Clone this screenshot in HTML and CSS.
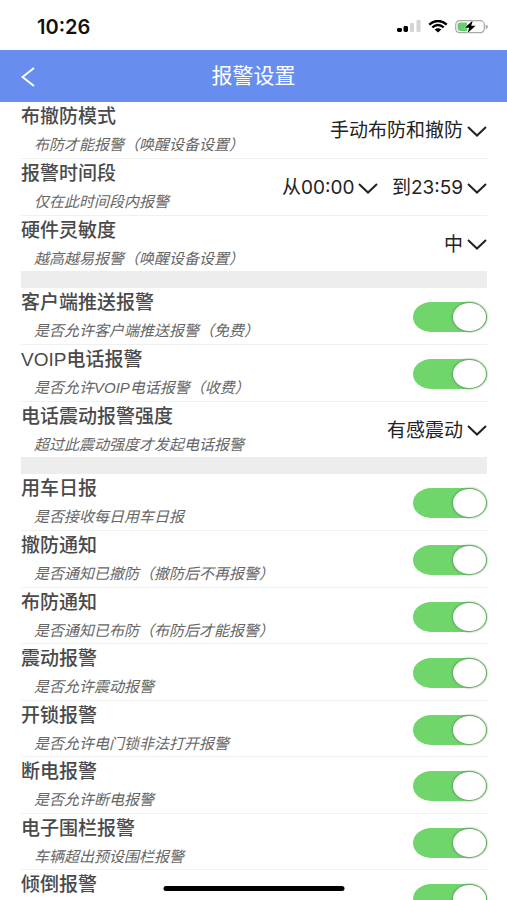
FILE: index.html
```html
<!DOCTYPE html>
<html lang="zh-CN">
<head>
<meta charset="utf-8">
<meta name="viewport" content="width=device-width, initial-scale=1">
<title>报警设置</title>
<link rel="stylesheet" href="styles.css">
</head>
<body>
<div class="status-bar">
  <span class="clock">10:26</span>
  <div class="status-icons">
    <svg class="signal" viewBox="0 0 24 13" aria-hidden="true">
      <rect x="0" y="8" width="5" height="4" rx="1.4"/>
      <rect x="6.5" y="6" width="4.5" height="6" rx="1.4"/>
      <rect class="faint" x="13" y="3" width="4" height="9" rx="1.2"/>
      <rect class="faint" x="19.500" y="0" width="4" height="12" rx="1.2"/>
    </svg>
    <svg class="wifi" viewBox="0 0 20 13" aria-hidden="true">
      <path d="M1.200 4.600Q10 -2.600 18.800 4.600"/>
      <path d="M4.300 7.400Q10 2.800 15.700 7.400"/>
      <path class="solid" d="M10 12.400L6.600 9.600Q10 7 13.400 9.600Z"/>
    </svg>
    <svg class="battery" viewBox="0 0 33 14" aria-hidden="true">
      <rect class="shell" x=".7" y=".7" width="28.600" height="12" rx="4"/>
      <path class="tip" d="M30.600 4.400Q33 5 33 6.700T30.600 9Z"/>
      <path class="charge" d="M5 2.400H12V11H5Q2.600 11 2.600 8.600V4.800Q2.600 2.400 5 2.400Z"/>
      <path class="bolt" d="M17.800 .4L9.800 7.700H14.200L12.600 13L20.600 5.800H16.200Z"/>
    </svg>
  </div>
</div>

<header class="nav-bar">
  <button class="back" type="button" aria-label="返回">
    <svg viewBox="0 0 14 20" aria-hidden="true"><path d="M13 1L1.500 10L13 19"/></svg>
  </button>
  <h1 class="nav-title">报警设置</h1>
</header>

<main class="settings">
  <section class="group">
    <div class="row">
      <div class="label"><label class="name" for="mode">布撤防模式</label><p class="hint">布防才能报警（唤醒设备设置）</p></div>
      <span class="picker"><select id="mode"><option>手动布防和撤防</option></select><svg class="chevron" viewBox="0 0 20 11" aria-hidden="true"><path d="M1 1L10 9.500L19 1"/></svg></span>
    </div>
    <div class="row">
      <div class="label"><span class="name">报警时间段</span><p class="hint">仅在此时间段内报警</p></div>
      <div class="range">
        <span class="picker"><select aria-label="开始时间"><option>从00:00</option></select><svg class="chevron" viewBox="0 0 20 11" aria-hidden="true"><path d="M1 1L10 9.500L19 1"/></svg></span>
        <span class="picker"><select aria-label="结束时间"><option>到23:59</option></select><svg class="chevron" viewBox="0 0 20 11" aria-hidden="true"><path d="M1 1L10 9.500L19 1"/></svg></span>
      </div>
    </div>
    <div class="row">
      <div class="label"><label class="name" for="sensitivity">硬件灵敏度</label><p class="hint">越高越易报警（唤醒设备设置）</p></div>
      <span class="picker"><select id="sensitivity"><option>中</option></select><svg class="chevron" viewBox="0 0 20 11" aria-hidden="true"><path d="M1 1L10 9.500L19 1"/></svg></span>
    </div>
  </section>

  <section class="group">
    <div class="row">
      <div class="label"><label class="name" for="push">客户端推送报警</label><p class="hint">是否允许客户端推送报警（免费）</p></div>
      <input class="switch" id="push" type="checkbox" role="switch" checked>
    </div>
    <div class="row">
      <div class="label"><label class="name" for="voip">VOIP电话报警</label><p class="hint">是否允许VOIP电话报警（收费）</p></div>
      <input class="switch" id="voip" type="checkbox" role="switch" checked>
    </div>
    <div class="row">
      <div class="label"><label class="name" for="strength">电话震动报警强度</label><p class="hint">超过此震动强度才发起电话报警</p></div>
      <span class="picker"><select id="strength"><option>有感震动</option></select><svg class="chevron" viewBox="0 0 20 11" aria-hidden="true"><path d="M1 1L10 9.500L19 1"/></svg></span>
    </div>
  </section>

  <section class="group">
    <div class="row">
      <div class="label"><label class="name" for="daily">用车日报</label><p class="hint">是否接收每日用车日报</p></div>
      <input class="switch" id="daily" type="checkbox" role="switch" checked>
    </div>
    <div class="row">
      <div class="label"><label class="name" for="disarm">撤防通知</label><p class="hint">是否通知已撤防（撤防后不再报警）</p></div>
      <input class="switch" id="disarm" type="checkbox" role="switch" checked>
    </div>
    <div class="row">
      <div class="label"><label class="name" for="arm">布防通知</label><p class="hint">是否通知已布防（布防后才能报警）</p></div>
      <input class="switch" id="arm" type="checkbox" role="switch" checked>
    </div>
    <div class="row">
      <div class="label"><label class="name" for="vibration">震动报警</label><p class="hint">是否允许震动报警</p></div>
      <input class="switch" id="vibration" type="checkbox" role="switch" checked>
    </div>
    <div class="row">
      <div class="label"><label class="name" for="unlock">开锁报警</label><p class="hint">是否允许电门锁非法打开报警</p></div>
      <input class="switch" id="unlock" type="checkbox" role="switch" checked>
    </div>
    <div class="row">
      <div class="label"><label class="name" for="power">断电报警</label><p class="hint">是否允许断电报警</p></div>
      <input class="switch" id="power" type="checkbox" role="switch" checked>
    </div>
    <div class="row">
      <div class="label"><label class="name" for="fence">电子围栏报警</label><p class="hint">车辆超出预设围栏报警</p></div>
      <input class="switch" id="fence" type="checkbox" role="switch" checked>
    </div>
    <div class="row">
      <div class="label"><label class="name" for="tilt">倾倒报警</label></div>
      <input class="switch" id="tilt" type="checkbox" role="switch" checked>
    </div>
  </section>
</main>
<div class="home-indicator"></div>
</body>
</html>
```
FILE: styles.css
```css
* {
  box-sizing: border-box;
}

body {
  margin: 0;
  height: 100vh;
  display: flex;
  flex-direction: column;
  overflow: hidden;
  background: #fff;
  color: #4a4a4a;
  font-family: "Liberation Sans", "Noto Sans CJK SC", sans-serif;
}

svg {
  display: block;
}

.status-bar {
  flex: none;
  display: flex;
  align-items: center;
  justify-content: space-between;
  height: 50px;
  padding: 3px 19px 0 37px;
}

.clock {
  color: #111;
  font: 600 20px/24px Inter, sans-serif;
}

.status-icons {
  display: flex;
  align-items: center;
  gap: 7px;
}

.signal {
  width: 24px;
  height: 13px;
}

.signal .faint {
  fill: #d4d4d4;
}

.wifi {
  width: 20px;
  height: 13px;
  fill: none;
  stroke: #000;
  stroke-width: 2.4;
}

.wifi .solid {
  fill: #000;
  stroke: none;
}

.battery {
  width: 33px;
  height: 14px;
}

.battery .shell {
  fill: #fff;
  stroke: #a8a8a8;
  stroke-width: 1.2;
}

.battery .tip {
  fill: #a8a8a8;
}

.battery .charge {
  fill: #68cd70;
}

.battery .bolt {
  fill: #000;
  stroke: #fff;
  stroke-width: 1;
  paint-order: stroke;
}

.nav-bar {
  flex: none;
  display: grid;
  grid-template-columns: 56px 1fr 56px;
  align-items: center;
  height: 52px;
  background: #678eef;
  color: #fff;
}

.back {
  display: flex;
  align-items: center;
  height: 52px;
  padding: 1px 0 0 21px;
  border: 0;
  background: none;
}

.back svg {
  width: 14px;
  height: 20px;
  fill: none;
  stroke: #fff;
  stroke-width: 2;
}

.nav-title {
  margin: 0;
  font-size: 21px;
  font-weight: 400;
  line-height: 30px;
  text-align: center;
}

.settings {
  flex: 1;
  min-height: 0;
  overflow: hidden;
  padding: 0 20px 0 21px;
}

.group + .group {
  border-top: 17px solid #ededed;
}

.row {
  display: flex;
  justify-content: space-between;
  height: 56px;
}

.row:nth-child(even) {
  height: 57px;
}

.row + .row {
  border-top: 1px solid #f0f0f0;
}

.label {
  padding-top: 1px;
}

.name {
  display: block;
  font-size: 19px;
  font-weight: 500;
  line-height: 28px;
}

.hint {
  margin: 0;
  padding-left: 13px;
  color: #666;
  font-size: 15px;
  font-style: italic;
  line-height: 28px;
}

.range {
  display: flex;
  gap: 14px;
}

.picker {
  display: flex;
  align-items: center;
  align-self: center;
  gap: 3px;
  padding-top: 2px;
}

.picker select {
  appearance: none;
  height: 28px;
  margin: 0;
  padding: 0;
  border: 0;
  background: none;
  color: #222;
  font-family: Inter, "Noto Sans CJK SC", sans-serif;
  font-size: 19px;
  line-height: 28px;
}

.chevron {
  width: 20px;
  height: 11px;
  fill: none;
  stroke: #222;
  stroke-width: 2;
}

.switch {
  appearance: none;
  display: flex;
  justify-content: flex-end;
  flex: none;
  align-self: center;
  width: 74px;
  height: 30px;
  margin: 2px 0 0;
  padding: 1px;
  border-radius: 18px / 15px;
  background: #70d66c;
}

.switch::before {
  content: "";
  width: 33px;
  height: 28px;
  border-radius: 50%;
  background: #fff;
  box-shadow: 0 0 2px 1px #5f9d5f;
}

.home-indicator {
  position: fixed;
  bottom: 9px;
  left: 50%;
  width: 181px;
  height: 5px;
  border-radius: 3px;
  background: #000;
  transform: translateX(-50%);
}
```
